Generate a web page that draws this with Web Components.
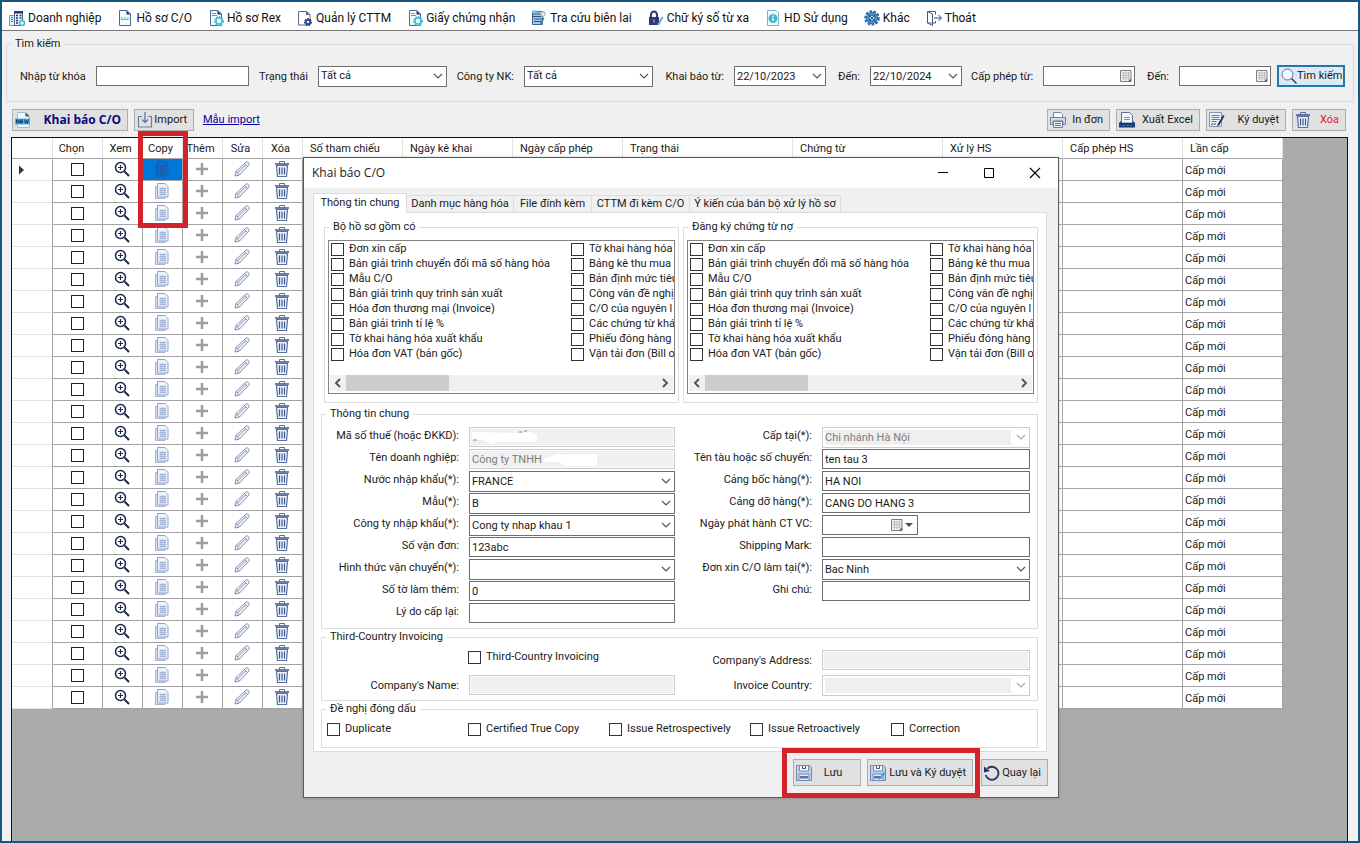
<!DOCTYPE html>
<html lang="vi">
<head>
<meta charset="utf-8">
<title>Khai báo C/O</title>
<style>
  html { height: 100%; }
  body { margin: 0; min-height: 100%; display: flex; font: 11px/14px Roboto, "Liberation Sans", sans-serif; color: #1a1a1a; background: #f0f0f0; }
</style>
</head>
<body>
<co-app></co-app>
<script>
const base = '*{box-sizing:border-box}[hidden]{display:none!important}input,select,button{font:inherit;color:inherit;border-radius:0;margin:0}';

const define = (name, render, after) => customElements.define(name, class extends HTMLElement {
  connectedCallback() {
    if (this.shadowRoot) return;
    const t = document.createElement('template');
    t.innerHTML = render(this);
    this.attachShadow({ mode: 'open' }).append(t.content.cloneNode(true));
    if (after) after(this.shadowRoot, this);
  }
});

/* ---------- icons, all on a 16 x 16 grid ---------- */
const page = '<path d="M2.500 .5h7.500l3.500 3.500v11.500h-11z" fill="#f4fbff" stroke="#4a6a94"/><path d="M9.500 .5v4h4z" fill="#1d3a66"/>';
const gear = (x, y, r, c, hole) => `<circle cx="${x}" cy="${y}" r="${r}" fill="none" stroke="${c}" stroke-width="2" stroke-dasharray="1.600 1"/><circle cx="${x}" cy="${y}" r="${r - 1}" fill="${hole}" stroke="${c}" stroke-width="1.500"/>`;
const floppy = c => `<path d="M.5 .5h13l2 2v13h-15z" fill="${c}" stroke="#7688b0"/><path d="M3.500 .5h9v5.500h-9z" fill="#f3f6fc" stroke="#7688b0"/><path d="M6.500 1v2.500h3v-2.500" fill="none" stroke="#3c5288"/><path d="M3 9h10v6.500h-10z" fill="#dfe6f4" stroke="#7688b0"/><path d="M4 11h8v2.500h-8z" fill="#5c74a6"/>`;
const icons = {
  company: '<path d="M.5 5.500h5v10h-5z" fill="#e3f1fa" stroke="#6f9cc4"/><path d="M2 7.500h2M2 9.500h2M2 11.500h2" stroke="#3f6aa0"/><path d="M5.500 1.500h8v14h-8z" fill="#eef4fb" stroke="#49658f"/><path d="M5 1h9v2.500h-9z" fill="#243b68"/><path d="M7 5.500h2m1.500 0h2M7 8h2m1.500 0h2M7 10.500h2M7 13h2" stroke="#1c3a70" stroke-width="1.500"/><circle cx="13" cy="13" r="2.500" fill="#fff" stroke="#3db9d3" stroke-width="1.500"/>',
  doc: page + '<path d="M3.500 8h2.500m1 0h2m1 0h2M4 9.500h7.500" stroke="#58b8cc" stroke-width="1"/>',
  docgear: page + '<path d="M4 3.500h4M4 5.500h5" stroke="#4aa6bb"/>' + gear(11, 11, 4, '#45bdd8', '#fff'),
  docset: '<path d="M1.500 1.500h8l3.500 3v10.500h-11.500z" fill="#fff" stroke="#56688a"/><path d="M9 1v4h4z" fill="#56688a"/>' + gear(11, 12, 3, '#1c3f7c', '#fff'),
  receipt: '<path d="M1.500 1.500h10v13h-10z" fill="#a9cbe4" stroke="#3b5f8d"/><path d="M1 4h10M1 6.500h10M3 9h8M3 11.500h8" stroke="#2d5080"/><path d="M1 .5h5v3h-5z" fill="#6ec0de"/><path d="M9 2h5v3l-3 2z" fill="#d5eef8" stroke="#8ab3cc"/><path d="M8.500 15l3-8 2 1-3 7z" fill="#4f7cb2"/>',
  lock: '<path d="M3 7V5a3 3.500 0 0 1 6 0v2" fill="none" stroke="#2c3878" stroke-width="2"/><path d="M1 7h10v8H1z" fill="#2c3878"/><path d="M5.500 9.500h1v3h-1z" fill="#b9c6ea"/><path d="M10 15l4.500-8" stroke="#55b3d1" stroke-width="2"/>',
  help: '<path d="M2.500 .5h8.500l2.500 2.500v12.500h-11z" fill="#f4fbff" stroke="#8eacc6"/><circle cx="8" cy="8.500" r="4.500" fill="#37bcd6"/><path d="M8 8v3M8 5.500v1.500" stroke="#fff" stroke-width="1.500"/>',
  other: '<circle cx="8" cy="8" r="6.500" fill="none" stroke="#2c6fa8" stroke-width="2.500" stroke-dasharray="2.600 1.300"/><circle cx="8" cy="8" r="5.500" fill="#4f9bcb" stroke="#2c6fa8"/><circle cx="8" cy="8" r="3" fill="#bfe0f2" stroke="#245c92"/><path d="M4 12l8-8M4 4l8 8" stroke="#245c92"/>',
  exit: '<path d="M1.500 1.500h8v3M1.500 1.500v11.500h8v-2M1.500 1.500l5 2.500v11.500l-5-2.500" fill="#fff" stroke="#4a5a7c"/><path d="M8 8h7M12.500 5l3 3-3 3" fill="none" stroke="#2b4a80"/>',
  new: '<path d="M2.500 .5h8l4 4v11h-12z" fill="#f2f7fb" stroke="#a6bccb"/><path d="M10.500 .5v4h4z" fill="#3a4c62"/><path d="M0 6.500h15v6H0z" fill="#3fb5e0"/><path d="M1.500 11.500v-4l2.500 4v-4M8 8H5.500v3H8M5.500 9.500H8M9.500 7.500l1 4 1-3 1 3 1-4" stroke="#123f70" fill="none"/>',
  import: '<path d="M5 4.500H1.500v10.500h13V4.500H11" fill="none" stroke="#6d7d9d" stroke-width="1.200"/><path d="M8 0v10M5 7.500l3 3 3-3" fill="none" stroke="#51719f" stroke-width="1.200"/>',
  print: '<path d="M3.500 5V.5h7l2 2V5" fill="#fafcff" stroke="#7285a8"/><path d="M.5 5.500h15v7H13V9H3v3.500H.5z" fill="#cfd9ea" stroke="#6b80a8"/><path d="M3.500 9.500h9v6h-9z" fill="#eef3fa" stroke="#6b80a8"/><path d="M5 11.500h6M5 13.500h6" stroke="#5a76a8"/>',
  excel: '<path d="M2.500 .5h8l3 3V11h-11z" fill="#f4f8fd" stroke="#5a7098"/><path d="M5 5.500h6M5 7.500h6" stroke="#7b92b8"/><path d="M0 11l2-2v2h12V9l2 2v4.500H0z" fill="#163c7a"/><path d="M3 13.500h10" stroke="#466eb0" stroke-dasharray="3 1"/>',
  sign: '<path d="M.5 .5h12v14H.5z" fill="#eef3f9" stroke="#8496b2"/><path d="M2.500 3.500h8M2.500 5.500h8M2.500 7.500h8M2.500 9.500h5" stroke="#5d7aa8"/><path d="M2 13l2-1.500 1 1 2-1" fill="none" stroke="#2c3f68"/><path d="M8.500 12.500L14 3l1.500 1-5 9-2.500 1.500z" fill="#22335c"/>',
  trash: '<path d="M5.500 2.500v-2h5v2" fill="none" stroke="#5c7098"/><path d="M1 3h14" stroke="#3e568c" stroke-width="1.500"/><path d="M2.500 4.500h11l-1 11h-9z" fill="#edf2fa" stroke="#5570a4" stroke-width="1.200"/><path d="M5.500 6.500v7M8 6.500v7M10.500 6.500v7" stroke="#3e568c" stroke-width="1.200"/>',
  search: '<circle cx="6.500" cy="6.500" r="5.500" fill="#f1f8fd" stroke="#5c6e96"/><path d="M10.500 10.500l5 5" stroke="#2c3e70" stroke-width="1.500"/>',
  zoom: '<circle cx="6.500" cy="6.500" r="5" fill="#fff" stroke="#1b2a4a" stroke-width="1.500"/><path d="M6.500 4v5M4 6.500h5" stroke="#1b2a4a" stroke-width="1.200"/><path d="M10.500 10.500l4.500 4.500" stroke="#1b2a4a" stroke-width="2"/>',
  copy: '<path d="M1.500 3.500H4v10h7v2H1.500z" fill="#d9e2f2" stroke="#a5b5d3"/><path d="M3.500 .5h7.500l3 3v10.500h-10.500z" fill="#eef2fa" stroke="#8fa3c8"/><path d="M5.500 5.500h6.500M5.500 7.500h6.500M5.500 9.500h6.500M5.500 11.500h6.500" stroke="#a3b3d5" stroke-width="1.500"/>',
  copysel: '<path d="M1.500 3.500H4v10h7v2H1.500z" fill="#0e68c2" stroke="#1567bd"/><path d="M3.500 .5h7.500l3 3v10.500h-10.500z" fill="#0e6dca" stroke="#1a5cab"/><path d="M5.500 5.500h6.500M5.500 7.500h6.500M5.500 9.500h6.500M5.500 11.500h6.500" stroke="#1a5cab" stroke-width="1.500"/>',
  plus: '<path d="M8 2v12M2 8h12" stroke="#9d9d9d" stroke-width="2.500"/>',
  pencil: '<path d="M1 15l1-4.500L12 1c1.500-1 4 1.500 3 3L5.500 14z" fill="#f0f4fa" stroke="#7c8fb6"/><path d="M10.500 2.500l3 3M3.500 12l8-8M2 10.500l3.500 3.500" fill="none" stroke="#7c8fb6"/>',
  floppy: floppy('#c3cfe6'),
  floppysign: floppy('#b4d3ee') + '<path d="M8 14l6-7 1.500 1.500-6 6z" fill="#4d9bd6"/>',
  back: '<path d="M3.300 3.700A6.500 6.500 0 1 1 1.700 10" fill="none" stroke="#27346c" stroke-width="1.800"/><path d="M0 7.500V1.500l6 4.500z" fill="#27346c"/>',
  cal: '<path d="M2.500 2.500h10.500v11h-10.500z" fill="#eceef0" stroke="#7d7d7d"/><path d="M4 5h8M4 7.500h8M4 10h8M5.500 4v8M8 4v8M10.500 4v8" stroke="#bcc0c6"/><path d="M10 13.500l3-3v3z" fill="#555"/>',
  chev: '<path d="M4 6l4 4 4-4" fill="none" stroke="#555" stroke-width="1.200"/>',
  down: '<path d="M4 6h8l-4 4z" fill="#3f5566"/>',
  min: '<path d="M3 7.500h10" stroke="#000"/>',
  max: '<path d="M3.500 3.500h9v9h-9z" fill="none" stroke="#000"/>',
  close: '<path d="M3 3l10 10M13 3L3 13" stroke="#000" stroke-width="1.100"/>',
  left: '<path d="M10 4L6 8l4 4" fill="none" stroke="#505050" stroke-width="1.800"/>',
  right: '<path d="M6 4l4 4-4 4" fill="none" stroke="#505050" stroke-width="1.800"/>',
  current: '<path d="M6 3.500L11 8l-5 4.500z" fill="#333"/>'
};
define('ui-icon', e => `<style>:host{display:block;flex:none;width:16px;height:16px}svg{display:block;width:100%;height:100%}</style>
  <svg viewBox="0 0 16 16" aria-hidden="true">${icons[e.getAttribute('name')] || ''}</svg>`);

/* ---------- small controls ---------- */
define('menu-item', e => `<style>${base}:host{display:block;flex:none}
  a{display:flex;align-items:center;gap:3px;height:28px;color:#111;text-decoration:none;font-size:12px;line-height:16px;white-space:nowrap}</style>
  <a href="#"><ui-icon name="${e.getAttribute('icon')}"></ui-icon><slot></slot></a>`);

define('tool-button', e => `<style>${base}:host{display:block;flex:none}
  button{display:flex;align-items:center;width:100%;height:100%;padding:0 6px 0 2px;background:#e1e1e1;border:1px solid #adadad;white-space:nowrap}
  span{flex:1;text-align:right}
  :host([centered]) span{text-align:center}
  :host([primary]) button{border:2px solid #2476ae;background:#dceaf5}
  :host([strong]) span{font:bold 12px/16px "Open Sans","Noto Sans",sans-serif;color:#0a0a7d}
  :host([danger]) span{color:#e3201f}</style>
  <button type="button"><ui-icon name="${e.getAttribute('icon')}"></ui-icon><span><slot></slot></span></button>`);

define('check-item', () => `<style>${base}:host{display:block}
  label{display:flex;align-items:center;gap:5px;white-space:nowrap}
  input{appearance:none;flex:none;width:13px;height:13px;border:1px solid #333;background:#fff}
  input:checked{background:#333}</style>
  <label><input type="checkbox"><slot></slot></label>`);

define('group-box', e => `<style>${base}:host{display:block;min-width:0}
  fieldset{margin:0;padding:0;border:1px solid #dcdcdc;min-width:0}
  legend{margin-left:4px;padding:0 4px;height:14px}</style>
  <fieldset><legend>${e.getAttribute('legend')}</legend><slot></slot></fieldset>`);

/* kind: text | select | date | calendar */
define('form-field', e => {
  const kind = e.getAttribute('kind') || 'text', val = e.getAttribute('value') || '';
  const dis = e.hasAttribute('disabled') ? 'disabled' : '';
  const control = kind === 'select'
    ? `<select id="c" ${dis}><option>${val}</option></select><ui-icon name="chev"></ui-icon>`
    : `<input id="c" type="text" value="${val}" ${dis}>` + (kind === 'date' ? '<ui-icon name="chev"></ui-icon>' : kind === 'calendar' ? `<ui-icon class="cal" name="cal"></ui-icon>` : '');
  return `<style>${base}
  :host{display:flex;align-items:flex-start;min-width:0}
  label{flex:1;padding:var(--label-top,2px) 10px 0 0;text-align:right;white-space:nowrap;line-height:14px}
  .box{position:relative;flex:none;width:var(--control,206px)}
  input,select{display:block;appearance:none;width:100%;height:20px;padding:0 2px;border:1px solid #6e6e6e;background:#fff;outline:0}
  select{height:21px}
  input:disabled{border-color:#ccc;background:#f0f0f0;box-shadow:inset 0 0 0 1px #fbfbfb;color:#7d7d7d}
  select:disabled{opacity:1;border-color:#ccc;color:#7d7d7d;background:linear-gradient(#efefef,#efefef) 2px 2px/calc(100% - 20px) calc(100% - 4px) no-repeat #fff}
  ui-icon{position:absolute;right:1px;top:2px;pointer-events:none}
  :host([disabled]) ui-icon{opacity:.5}
  :host([drop]) .cal{right:13px}
  .drop{right:1px}
  </style>
  <label for="c">${e.getAttribute('label')}</label>
  <div class="box">${control}${e.hasAttribute('drop') ? '<ui-icon class="drop" name="down"></ui-icon>' : ''}<slot></slot></div>`;
});

/* ---------- multi-column checked list with its scroll bar ---------- */
const docs = ['Đơn xin cấp','Bản giải trình chuyển đổi mã số hàng hóa','Mẫu C/O','Bản giải trình quy trình sản xuất','Hóa đơn thương mại (Invoice)','Bản giải trình tỉ lệ %','Tờ khai hàng hóa xuất khẩu','Hóa đơn VAT (bản gốc)',
  'Tờ khai hàng hóa','Bảng kê thu mua','Bản định mức tiêu','Công văn đề nghị','C/O của nguyên l','Các chứng từ khá','Phiếu đóng hàng','Vận tải đơn (Bill of'];
define('check-list', () => `<style>${base}
  :host{display:flex;flex-direction:column;height:154px;border:1px solid #828282;background:#fff;padding:1px 0 1px 1px}
  .items{flex:1;display:grid;grid-template-columns:240px 1fr;grid-template-rows:repeat(8,15px);grid-auto-flow:column;overflow:hidden;padding-left:1px}
  check-item{height:15px;min-width:0}
  .bar{display:flex;height:16px;background:#f0f0f0;margin:0 1px 1px 0}
  .track{flex:1}.thumb{width:103px;height:16px;background:#cdcdcd}</style>
  <div class="items">${docs.map(d => `<check-item>${d}</check-item>`).join('')}</div>
  <div class="bar"><ui-icon name="left"></ui-icon><div class="track"><div class="thumb"></div></div><ui-icon name="right"></ui-icon></div>`);

/* ---------- records table ---------- */
const cols = [['',41],['Chọn',50],['Xem',40],['Copy',40],['Thêm',40],['Sửa',40],['Xóa',40],['Số tham chiếu',100],['Ngày kê khai',110],['Ngày cấp phép',110],['Trạng thái',170],['Chứng từ',150],['Xử lý HS',120],['Cấp phép HS',120],['Lần cấp',100]];
define('data-grid', () => {
  const row = i => `<tr><td>${i ? '' : '<ui-icon name="current"></ui-icon>'}</td><td><input type="checkbox" aria-label="Chọn dòng ${i + 1}"></td>` +
    ['zoom', 'copy', 'plus', 'pencil', 'trash'].map(n => `<td${n === 'copy' && !i ? ' class="sel"' : ''}><ui-icon name="${n === 'copy' && !i ? 'copysel' : n}"></ui-icon></td>`).join('') +
    '<td></td>'.repeat(7) + '<td>Cấp mới</td></tr>';
  return `<style>${base}
  :host{display:block;position:relative;border:1px solid #111;background:#ababab}
  .clip{overflow:hidden}
  table{table-layout:fixed;width:1271px;border-collapse:separate;border-spacing:0;background:#fff}
  th{height:21px;padding:2px 0 0 7px;font-weight:400;text-align:left;border-right:1px solid #e2e2e2;border-bottom:1px solid #a3a3a3;white-space:nowrap}
  th:nth-child(-n+7){text-align:center;padding:2px 4px 0 0}
  th:nth-child(2){padding-right:12px}
  td{height:22px;padding:2px 2px 0;border-right:1px solid #a3a3a3;border-bottom:1px solid #a3a3a3}
  td:first-child{border-color:#e2e2e2;border-right-color:#a3a3a3;padding:0}
  td:nth-child(n+2):nth-child(-n+7){padding:0}
  td ui-icon{margin:0 0 1px 11px}
  td input{margin:0 auto}
  td:first-child ui-icon{margin:0 0 0 1px}
  td.sel{background:#0078d7}
  input{display:block;appearance:none;width:13px;height:13px;border:1px solid #222;background:#fff}
  </style>
  <div class="clip"><table><colgroup>${cols.map(c => `<col style="width:${c[1]}px">`).join('')}</colgroup>
  <thead><tr>${cols.map(c => `<th scope="col">${c[0]}</th>`).join('')}</tr></thead>
  <tbody>${Array.from({ length: 25 }, (_, i) => row(i)).join('')}</tbody></table></div><slot></slot>`;
});

/* ---------- entry dialog ---------- */
const F = (label, kind, value, extra = '') => `<form-field label="${label}" kind="${kind}" value="${value}" ${extra}></form-field>`;
define('co-dialog', () => `<style>${base}
  :host{display:block;border:1px solid #5a5a5a;background:#f0f0f0;box-shadow:0 0 3px #0003}
  header{display:flex;align-items:center;height:30px;padding-left:8px;background:#fff;font:12px/16px "Open Sans","Noto Sans",sans-serif}
  h1{flex:1;margin:0;font:inherit}
  header button{display:grid;place-items:center;width:46px;height:28px;border:0;padding:0;background:none}
  .tabs{display:flex;align-items:flex-end;height:24px;margin:0 11px 0 9px}
  .tabs button{height:17px;padding:0;text-align:center;white-space:nowrap;border:1px solid #dcdcdc;border-left:0;border-bottom:0;background:#f0f0f0}
  .tabs .on{position:relative;height:20px;margin-bottom:-1px;background:#fff;border-left:1px solid #dcdcdc;padding-bottom:2px}
  .pane{margin:0 11px 0 9px;border:1px solid #dcdcdc;background:#fff;padding:7px 8px 3px 7px}
  .lists{display:grid;grid-template-columns:1fr 1fr;gap:4px;margin-left:3px}
  .lists check-list{margin:6px 3px 8px}
  .info{margin-top:4px}
  .form{display:grid;grid-template-columns:353px 1fr;grid-auto-flow:column;padding:6px 7px 0 0}
  .left{--control:206px}.right{--control:208px}
  .main{grid-template-rows:repeat(9,22px);padding-bottom:3px}
  .third{grid-template-rows:25px 25px}
  .third form-field{--label-top:4px}
  .short{--control:96px;padding-right:112px}
  .third check-item{margin-left:146px;height:14px}
  .tight{margin-top:1px}
  .stamps{display:grid;grid-template-columns:repeat(5,141px);padding:6px 0 12px 5px}
  .stamps check-item{height:13px}
  footer{display:flex;justify-content:flex-end;gap:8px;padding:7px 10px 11px}
  .save{position:relative;display:flex;gap:6px}
  tool-button{height:27px}
  .ring{position:absolute;inset:-11px -7px -12px -11px;border:5px solid #d2232a;pointer-events:none}
  svg{position:absolute;fill:#fff}
  </style>
  <header><h1>Khai báo C/O</h1>
    <button type="button" aria-label="Thu nhỏ"><ui-icon name="min"></ui-icon></button><button type="button" aria-label="Phóng to"><ui-icon name="max"></ui-icon></button><button type="button" aria-label="Đóng"><ui-icon name="close"></ui-icon></button></header>
  <div class="tabs" role="tablist"><button type="button" role="tab" class="on" style="width:94px">Thông tin chung</button><button type="button" role="tab" style="width:107px">Danh mục hàng hóa</button><button type="button" role="tab" style="width:78px">File đính kèm</button><button type="button" role="tab" style="width:98px">CTTM đi kèm C/O</button><button type="button" role="tab" style="width:151px">Ý kiến của bán bộ xử lý hồ sơ</button></div>
  <div class="pane">
    <div class="lists"><group-box legend="Bộ hồ sơ gồm có"><check-list></check-list></group-box><group-box legend="Đăng ký chứng từ nợ"><check-list></check-list></group-box></div>
    <group-box class="info" legend="Thông tin chung"><div class="form main">
      <form-field class="left" label="Mã số thuế (hoặc ĐKKD):" disabled><svg style="left:3px;top:3px" width="66" height="14" viewBox="0 0 66 14"><path d="M0 2L46 3 60 2 65 5V12H26L20 14 10 10H0z"/><path d="M1 10h4M47 2h3M52 1h3" stroke="#888"/></svg></form-field>
      <form-field class="left" label="Tên doanh nghiệp:" value="Công ty TNHH" disabled><svg style="left:74px;top:3px" width="56" height="14" viewBox="0 0 56 14"><path d="M0 7L14 2 20 3 54 2V14H22L16 10H2z"/></svg></form-field>
      ${F('Nước nhập khẩu(*):', 'select', 'FRANCE', 'class="left"')}
      ${F('Mẫu(*):', 'select', 'B', 'class="left"')}
      ${F('Công ty nhập khẩu(*):', 'select', 'Cong ty nhap khau 1', 'class="left"')}
      ${F('Số vận đơn:', 'text', '123abc', 'class="left"')}
      ${F('Hình thức vận chuyển(*):', 'select', '', 'class="left"')}
      ${F('Số tờ làm thêm:', 'text', '0', 'class="left"')}
      ${F('Lý do cấp lại:', 'text', '', 'class="left"')}
      ${F('Cấp tại(*):', 'select', 'Chi nhánh Hà Nội', 'class="right" disabled')}
      ${F('Tên tàu hoặc số chuyến:', 'text', 'ten tau 3', 'class="right"')}
      ${F('Cảng bốc hàng(*):', 'text', 'HA NOI', 'class="right"')}
      ${F('Cảng dỡ hàng(*):', 'text', 'CANG DO HANG 3', 'class="right"')}
      ${F('Ngày phát hành CT VC:', 'calendar', '', 'class="short" drop')}
      ${F('Shipping Mark:', 'text', '', 'class="right"')}
      ${F('Đơn xin C/O làm tại(*):', 'select', 'Bac Ninh', 'class="right"')}
      ${F('Ghi chú:', 'text', '', 'class="right"')}
    </div></group-box>
    <group-box class="tight" legend="Third-Country Invoicing"><div class="form third">
      <check-item>Third-Country Invoicing</check-item>
      ${F('Company\'s Name:', 'text', '', 'class="left" disabled')}
      ${F('Company\'s Address:', 'text', '', 'class="right" disabled')}
      ${F('Invoice Country:', 'select', '', 'class="right" disabled')}
    </div></group-box>
    <group-box class="tight" legend="Đề nghị đóng dấu"><div class="stamps">
      <check-item>Duplicate</check-item><check-item>Certified True Copy</check-item><check-item>Issue Retrospectively</check-item><check-item>Issue Retroactively</check-item><check-item>Correction</check-item>
    </div></group-box>
  </div>
  <footer><div class="save"><tool-button icon="floppy" centered style="width:68px">Lưu</tool-button><tool-button icon="floppysign" style="width:106px">Lưu và Ký duyệt</tool-button><div class="ring"></div></div><tool-button icon="back" style="width:67px">Quay lại</tool-button></footer>`);

/* ---------- application window ---------- */
define('co-app', () => `<style>${base}
  :host{display:flex;flex:1;min-width:0;flex-direction:column;position:relative;border:2px solid #18557f;overflow:hidden}
  nav{display:flex;gap:16px;height:29px;padding:2px 7px 0;background:#fff;border-bottom:1px solid #777}
  .search{margin:6px 4px 0}
  .fields{display:flex;align-items:center;height:50px;padding:0 8px 0 13px}
  .fields form-field{flex:none;--label-top:4px}
  .fields form-field:not(:first-child){margin-left:9px}
  .fields tool-button{margin-left:6px;width:68px;height:22px}
  .tools{display:flex;align-items:center;gap:6px;padding:7px 12px 7px 10px}
  .tools tool-button{height:22px}
  .tools a{margin-left:3px;color:#0000a0}
  .gap{flex:1}
  data-grid{flex:1;margin:-1px 10px 0 9px;border-bottom:0}
  .ring{position:absolute;left:126px;top:-7px;width:50px;height:97px;border:5px solid #d2232a;pointer-events:none}
  co-dialog{position:absolute;left:301px;top:155px;width:756px}
  </style>
  <nav>${[['company','Doanh nghiệp'],['doc','Hồ sơ C/O'],['docgear','Hồ sơ Rex'],['docset','Quản lý CTTM'],['docgear','Giấy chứng nhận'],['receipt','Tra cứu biên lai'],['lock','Chữ ký số từ xa'],['help','HD Sử dụng'],['other','Khác'],['exit','Thoát']].map(m => `<menu-item icon="${m[0]}">${m[1]}</menu-item>`).join('')}</nav>
  <group-box class="search" legend="Tìm kiếm"><div class="fields">
    ${F('Nhập từ khóa', 'text', '', 'style="width:228px;--control:153px"')}
    ${F('Trạng thái', 'select', 'Tất cả', 'style="width:190px;--control:129px"')}
    ${F('Công ty NK:', 'select', 'Tất cả', 'style="width:197px;--control:129px"')}
    ${F('Khai báo từ:', 'date', '22/10/2023', 'style="width:164px;--control:92px"')}
    ${F('Đến:', 'date', '22/10/2024', 'style="width:127px;--control:92px"')}
    ${F('Cấp phép từ:', 'calendar', '', 'style="width:164px;--control:92px"')}
    ${F('Đến:', 'calendar', '', 'style="width:127px;--control:92px"')}
    <tool-button icon="search" primary>Tìm kiếm</tool-button>
  </div></group-box>
  <div class="tools"><tool-button icon="new" strong style="width:116px">Khai báo C/O</tool-button><tool-button icon="import" style="width:60px">Import</tool-button><a href="#">Mẫu import</a><span class="gap"></span>
    <tool-button icon="print" style="width:63px">In đơn</tool-button><tool-button icon="excel" style="width:84px">Xuất Excel</tool-button><tool-button icon="sign" style="width:80px">Ký duyệt</tool-button><tool-button icon="trash" danger style="width:54px">Xóa</tool-button></div>
  <data-grid><div class="ring"></div></data-grid>
  <co-dialog></co-dialog>`);
</script>
</body>
</html>
